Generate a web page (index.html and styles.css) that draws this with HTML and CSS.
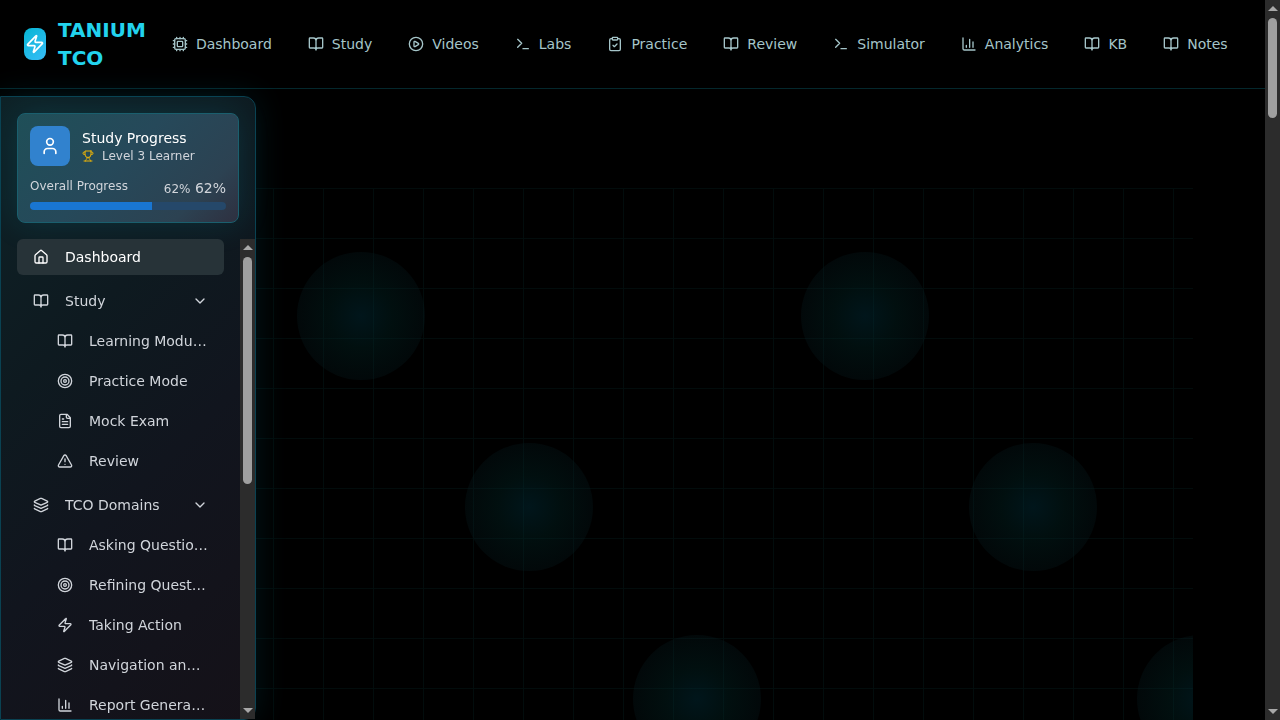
FILE: index.html
```html
<!DOCTYPE html>
<html lang="en">
<head>
<meta charset="utf-8">
<meta name="viewport" content="width=device-width, initial-scale=1">
<title>Tanium TCO</title>
<link rel="stylesheet" href="styles.css">
</head>
<body>
<svg class="sprite" aria-hidden="true">
  <symbol id="zap" viewBox="0 0 24 24"><path d="M4 14a1 1 0 0 1-.78-1.63l9.9-10.2a.5.5 0 0 1 .86.46l-1.92 6.02A1 1 0 0 0 13 10h7a1 1 0 0 1 .78 1.63l-9.9 10.2a.5.5 0 0 1-.86-.46l1.92-6.02A1 1 0 0 0 11 14z"/></symbol>
  <symbol id="cpu" viewBox="0 0 24 24"><rect width="16" height="16" x="4" y="4" rx="2"/><rect width="8" height="8" x="8" y="8" rx="1"/><path d="M12 20v2M12 2v2M17 20v2M17 2v2M2 12h2M2 17h2M2 7h2M20 12h2M20 17h2M20 7h2M7 20v2M7 2v2"/></symbol>
  <symbol id="book" viewBox="0 0 24 24"><path d="M12 7v14M3 18a1 1 0 0 1-1-1V4a1 1 0 0 1 1-1h5a4 4 0 0 1 4 4 4 4 0 0 1 4-4h5a1 1 0 0 1 1 1v13a1 1 0 0 1-1 1h-6a3 3 0 0 0-3 3 3 3 0 0 0-3-3z"/></symbol>
  <symbol id="play" viewBox="0 0 24 24"><circle cx="12" cy="12" r="10"/><path d="M9 9a1 1 0 0 1 1.520-.86l5 3a1 1 0 0 1 0 1.720l-5 3A1 1 0 0 1 9 15z"/></symbol>
  <symbol id="terminal" viewBox="0 0 24 24"><path d="m4 17 6-6-6-6M12 19h8"/></symbol>
  <symbol id="clipboard" viewBox="0 0 24 24"><rect width="8" height="4" x="8" y="2" rx="1"/><path d="M16 4h2a2 2 0 0 1 2 2v14a2 2 0 0 1-2 2H6a2 2 0 0 1-2-2V6a2 2 0 0 1 2-2h2M9 14l2 2 4-4"/></symbol>
  <symbol id="chart" viewBox="0 0 24 24"><path d="M3 3v16a2 2 0 0 0 2 2h16M18 17V9M13 17V5M8 17v-3"/></symbol>
  <symbol id="user" viewBox="0 0 24 24"><path d="M19 21v-2a4 4 0 0 0-4-4H9a4 4 0 0 0-4 4v2"/><circle cx="12" cy="7" r="4"/></symbol>
  <symbol id="trophy" viewBox="0 0 24 24"><path d="M6 9H4.500a2.500 2.500 0 0 1 0-5H6M18 9h1.500a2.500 2.500 0 0 0 0-5H18M4 22h16M10 14.660V17c0 .55-.47.98-.97 1.210C7.850 18.750 7 20.240 7 22M14 14.660V17c0 .55.47.98.97 1.210C16.150 18.750 17 20.240 17 22M18 2H6v7a6 6 0 0 0 12 0V2Z"/></symbol>
  <symbol id="house" viewBox="0 0 24 24"><path d="M15 21v-8a1 1 0 0 0-1-1h-4a1 1 0 0 0-1 1v8"/><path d="M3 10a2 2 0 0 1 .709-1.528l7-5.999a2 2 0 0 1 2.582 0l7 5.999A2 2 0 0 1 21 10v9a2 2 0 0 1-2 2H5a2 2 0 0 1-2-2z"/></symbol>
  <symbol id="target" viewBox="0 0 24 24"><circle cx="12" cy="12" r="10"/><circle cx="12" cy="12" r="6"/><circle cx="12" cy="12" r="2"/></symbol>
  <symbol id="file" viewBox="0 0 24 24"><path d="M15 2H6a2 2 0 0 0-2 2v16a2 2 0 0 0 2 2h12a2 2 0 0 0 2-2V7ZM14 2v4a2 2 0 0 0 2 2h4M10 9H8M16 13H8M16 17H8"/></symbol>
  <symbol id="alert" viewBox="0 0 24 24"><path d="m21.730 18-8-14a2 2 0 0 0-3.480 0l-8 14A2 2 0 0 0 4 21h16a2 2 0 0 0 1.730-3M12 9v4M12 17h.01"/></symbol>
  <symbol id="layers" viewBox="0 0 24 24"><path d="M12.830 2.180a2 2 0 0 0-1.660 0L2.600 6.080a1 1 0 0 0 0 1.830l8.580 3.910a2 2 0 0 0 1.660 0l8.580-3.900a1 1 0 0 0 0-1.830zM2 12a1 1 0 0 0 .58.91l8.600 3.910a2 2 0 0 0 1.650 0l8.580-3.900A1 1 0 0 0 22 12M2 17a1 1 0 0 0 .58.91l8.600 3.910a2 2 0 0 0 1.650 0l8.580-3.900A1 1 0 0 0 22 17"/></symbol>
  <symbol id="chevron" viewBox="0 0 24 24"><path d="m6 9 6 6 6-6"/></symbol>
</svg>

<div class="app">
  <div class="content">
    <header class="topbar">
      <a class="brand" href="#">
        <span class="brand-mark"><svg class="icon icon-md"><use href="#zap"/></svg></span>
        <span class="brand-name">TANIUM TCO</span>
      </a>
      <nav class="topnav" aria-label="Main">
        <a href="#"><svg class="icon"><use href="#cpu"/></svg>Dashboard</a>
        <a href="#"><svg class="icon"><use href="#book"/></svg>Study</a>
        <a href="#"><svg class="icon"><use href="#play"/></svg>Videos</a>
        <a href="#"><svg class="icon"><use href="#terminal"/></svg>Labs</a>
        <a href="#"><svg class="icon"><use href="#clipboard"/></svg>Practice</a>
        <a href="#"><svg class="icon"><use href="#book"/></svg>Review</a>
        <a href="#"><svg class="icon"><use href="#terminal"/></svg>Simulator</a>
        <a href="#"><svg class="icon"><use href="#chart"/></svg>Analytics</a>
        <a href="#"><svg class="icon"><use href="#book"/></svg>KB</a>
        <a href="#"><svg class="icon"><use href="#book"/></svg>Notes</a>
      </nav>
    </header>

    <main class="page">
      <div class="backdrop" aria-hidden="true">
        <span class="orb orb-1"></span>
        <span class="orb orb-2"></span>
        <span class="orb orb-3"></span>
        <span class="orb orb-4"></span>
        <span class="orb orb-5"></span>
        <span class="orb orb-6"></span>
      </div>
    </main>
  </div>
  <div class="scrollbar" aria-hidden="true">
    <span class="arrow arrow-up"></span>
    <span class="track"><span class="thumb thumb-page"></span></span>
    <span class="arrow arrow-down"></span>
  </div>
</div>

<aside class="sidebar">
  <section class="card">
    <div class="profile">
      <span class="avatar"><svg class="icon icon-md"><use href="#user"/></svg></span>
      <div>
        <div class="profile-title">Study Progress</div>
        <div class="profile-level"><svg class="icon icon-sm"><use href="#trophy"/></svg>Level 3 Learner</div>
      </div>
    </div>
    <div class="progress-row">
      <span class="small" id="progress-label">Overall Progress</span>
      <span class="progress-values"><span class="small">62%</span> <span>62%</span></span>
    </div>
    <div class="progress" role="progressbar" aria-labelledby="progress-label" aria-valuenow="62" aria-valuemin="0" aria-valuemax="100">
      <div class="progress-fill" style="width: 62%"></div>
    </div>
  </section>
  <div class="menu">
    <nav class="menu-list" aria-label="Study">
      <a class="item active" href="#"><svg class="icon"><use href="#house"/></svg><span class="label">Dashboard</span></a>
      <div class="group">
        <button class="item" type="button" aria-expanded="true"><svg class="icon"><use href="#book"/></svg><span class="label">Study</span><svg class="icon"><use href="#chevron"/></svg></button>
        <div class="submenu">
          <a class="item" href="#"><svg class="icon"><use href="#book"/></svg><span class="label">Learning Modules</span></a>
          <a class="item" href="#"><svg class="icon"><use href="#target"/></svg><span class="label">Practice Mode</span></a>
          <a class="item" href="#"><svg class="icon"><use href="#file"/></svg><span class="label">Mock Exam</span></a>
          <a class="item" href="#"><svg class="icon"><use href="#alert"/></svg><span class="label">Review</span></a>
        </div>
      </div>
      <div class="group">
        <button class="item" type="button" aria-expanded="true"><svg class="icon"><use href="#layers"/></svg><span class="label">TCO Domains</span><svg class="icon"><use href="#chevron"/></svg></button>
        <div class="submenu">
          <a class="item" href="#"><svg class="icon"><use href="#book"/></svg><span class="label">Asking Questions</span></a>
          <a class="item" href="#"><svg class="icon"><use href="#target"/></svg><span class="label">Refining Questions</span></a>
          <a class="item" href="#"><svg class="icon"><use href="#zap"/></svg><span class="label">Taking Action</span></a>
          <a class="item" href="#"><svg class="icon"><use href="#layers"/></svg><span class="label">Navigation and Modules</span></a>
          <a class="item" href="#"><svg class="icon"><use href="#chart"/></svg><span class="label">Report Generation</span></a>
        </div>
      </div>
    </nav>
    <div class="scrollbar" aria-hidden="true">
      <span class="arrow arrow-up"></span>
      <span class="track"><span class="thumb thumb-menu"></span></span>
      <span class="arrow arrow-down"></span>
    </div>
  </div>
</aside>
</body>
</html>
```

FILE: styles.css
```css
:root {
  color-scheme: dark;
}

* {
  box-sizing: border-box;
}

body {
  margin: 0;
  background: #000;
  color: #d1d5db;
  font: 14px/20px "DejaVu Sans", sans-serif;
}

a {
  color: inherit;
  text-decoration: none;
}

.sprite {
  display: none;
}

.icon {
  width: 16px;
  height: 16px;
  flex: none;
  fill: none;
  stroke: currentColor;
  stroke-width: 2;
  stroke-linecap: round;
  stroke-linejoin: round;
}

.icon-sm {
  width: 12px;
  height: 12px;
}

.icon-md {
  width: 20px;
  height: 20px;
}

.app {
  display: flex;
  height: 100vh;
}

.content {
  flex: 1;
  min-width: 0;
  display: flex;
  flex-direction: column;
}

/* Scrollbars */

.scrollbar {
  flex: none;
  display: flex;
  flex-direction: column;
  align-items: center;
  width: 15px;
  background: #2c2c2c;
}

.track {
  flex: 1;
  padding: 4px 0;
}

.thumb {
  display: block;
  width: 9px;
  border-radius: 5px;
  background: #9f9f9f;
}

.thumb-page {
  height: 100px;
}

.thumb-menu {
  height: 227px;
}

.arrow {
  height: 14px;
  border: 0 solid transparent;
  border-width: 0 5px;
}

.arrow-up {
  height: 5px;
  margin: 6px 0 3px;
  border-bottom: 5px solid #a8a8a8;
}

.arrow-down {
  height: 5px;
  margin: 3px 0 6px;
  border-top: 5px solid #a8a8a8;
}

/* Top bar */

.topbar {
  display: flex;
  align-items: center;
  gap: 10px;
  padding: 16px 22px 16px 24px;
  border-bottom: 1px solid #04282d;
}

.brand {
  display: flex;
  align-items: center;
  gap: 12px;
  color: #22d3ee;
  font-size: 20px;
  line-height: 28px;
  font-weight: 700;
}

.brand-name {
  width: min-content;
}

.brand-mark {
  display: flex;
  align-items: center;
  justify-content: center;
  width: 22px;
  height: 32px;
  border-radius: 8px;
  background: linear-gradient(135deg, #06b6d4, #38bdf8);
  color: #fff;
}

.topnav {
  display: flex;
  gap: 4px;
}

.topnav a {
  display: flex;
  align-items: center;
  gap: 8px;
  padding: 8px 16px;
  color: #a5c5c9;
  white-space: nowrap;
}

/* Sidebar */

.sidebar {
  position: fixed;
  top: 96px;
  bottom: 0;
  left: 0;
  display: flex;
  flex-direction: column;
  gap: 16px;
  width: 256px;
  padding: 16px 0 0 16px;
  border: 1px solid #0a4252;
  border-radius: 0 12px 12px 0;
  background: linear-gradient(135deg, #0e2227, #0e1a20 35%, #11151e 60%, #151118);
  box-shadow: 0 0 32px rgba(6, 140, 165, 0.16);
}

.card {
  margin-right: 16px;
  padding: 12px;
  border: 1px solid #1a5f6e;
  border-radius: 8px;
  background: linear-gradient(135deg, #1f4f58, #26495a 45%, #2c4252 80%, #2e3040);
  box-shadow: 0 0 32px rgba(6, 182, 212, 0.15);
}

.profile {
  display: flex;
  align-items: center;
  gap: 12px;
}

.avatar {
  display: flex;
  align-items: center;
  justify-content: center;
  width: 40px;
  height: 40px;
  border-radius: 8px;
  background: #3182ce;
  color: #fff;
}

.profile-title {
  color: #fff;
}

.profile-level {
  display: flex;
  align-items: center;
  gap: 8px;
  font-size: 12px;
  line-height: 16px;
}

.profile-level .icon {
  color: #eab308;
}

.progress-row {
  display: flex;
  justify-content: space-between;
  margin: 12px 0 4px;
}

.small {
  font-size: 12px;
  line-height: 16px;
}

.progress {
  height: 8px;
  border-radius: 4px;
  overflow: hidden;
  background: #25486a;
}

.progress-fill {
  height: 100%;
  background: #1976d2;
}

.menu {
  flex: 1;
  min-height: 0;
  display: flex;
}

.menu-list {
  flex: 1;
  min-width: 0;
  display: flex;
  flex-direction: column;
  gap: 8px;
  padding-right: 16px;
  overflow-y: auto;
  scrollbar-width: none;
}

.item {
  display: flex;
  align-items: center;
  gap: 16px;
  width: 100%;
  padding: 8px 16px;
  border: 0;
  border-radius: 6px;
  background: none;
  color: inherit;
  font: inherit;
  text-align: left;
}

.item.active {
  background: #273338;
  color: #fff;
}

.label {
  flex: 1;
  min-width: 0;
  overflow: hidden;
  text-overflow: ellipsis;
  white-space: nowrap;
}

.submenu {
  display: flex;
  flex-direction: column;
  gap: 4px;
  padding: 4px 0 0 24px;
}

/* Page backdrop */

.page {
  flex: 1;
  min-height: 0;
  display: flex;
  justify-content: center;
  padding-top: 99px;
}

.backdrop {
  position: relative;
  width: 100%;
  max-width: 1120px;
  overflow: hidden;
  background:
    linear-gradient(#020c0c 1px, transparent 1px) 0 0 / 50px 50px,
    linear-gradient(90deg, #020c0c 1px, transparent 1px) 0 0 / 50px 50px;
}

.orb {
  position: absolute;
  width: 128px;
  height: 128px;
  border-radius: 50%;
  background: radial-gradient(circle, rgba(2, 48, 60, 0.45), rgba(3, 38, 38, 0.4) 35%, rgba(6, 28, 32, 0.3) 70%);
}

.orb-1 { left: 20%; top: 64px; }
.orb-2 { left: 65%; top: 64px; }
.orb-3 { left: 35%; top: 255px; }
.orb-4 { left: 80%; top: 255px; }
.orb-5 { left: 50%; top: 447px; }
.orb-6 { left: 95%; top: 447px; }
```
